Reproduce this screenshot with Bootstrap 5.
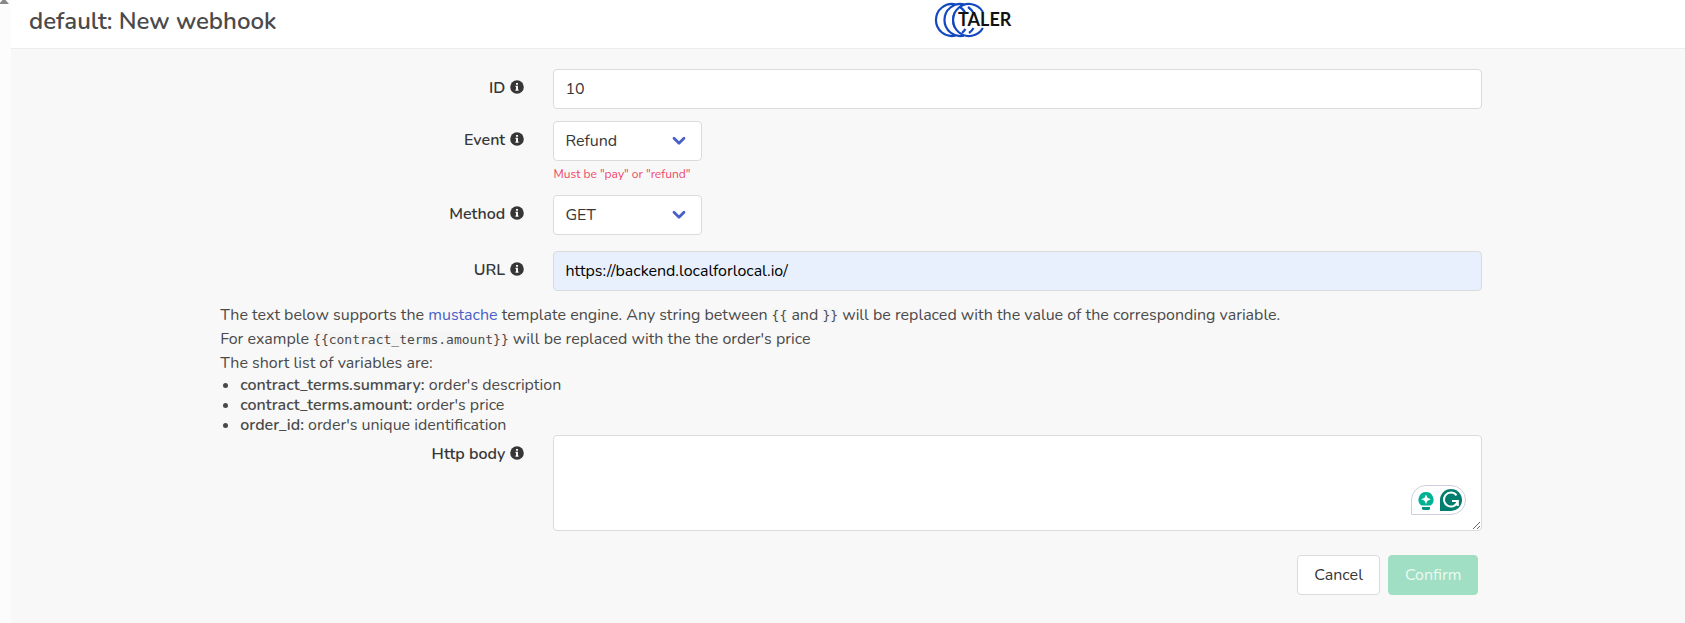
<!DOCTYPE html>
<html lang="en">
<head>
<meta charset="utf-8">
<meta name="viewport" content="width=device-width, initial-scale=1">
<title>default: New webhook</title>
<link href="https://cdn.jsdelivr.net/npm/bootstrap@5.3.0/dist/css/bootstrap.min.css" rel="stylesheet">
<style>
body { font-family: Nunito, "Open Sans", sans-serif; font-size: 16px; line-height: 24px; color: #4a4a4a; background: #f8f8f8; }
.side-strip { width: 11px; background: #fcfcfc; }
.side-strip svg { display: block; }
.title-bar { height: 49px; padding: 1px 0 0 18px; border-bottom: 1px solid #ededed; }
.title-bar h1 { font-size: 24px; line-height: 40px; font-weight: 600; }
.brand-mark { left: 57.5%; top: 2px; }
.hook-form { margin-left: 12.5%; width: 75.4%; padding-top: 20px; }
.field-row { gap: 29px; margin-bottom: 12px; }
.field-name { flex: 0 0 24.1%; padding-top: 7px; text-align: right; font-weight: 600; color: #363636; }
.field-name svg { margin: -4px 0 0 1px; }
.form-control, .form-select { height: 40px; padding: 7px 11px; font-size: 16px; line-height: 24px; color: #363636; border-color: #dbdbdb; border-radius: 4px; }
.form-select { width: 149px; background-image: none; }
.pick svg { right: 16px; top: 15px; pointer-events: none; }
.autofilled { background: #e8f0fe; color: #000; }
.form-control.body-text { height: 96px; }
.help-text { margin-top: 4px; font-size: 12px; line-height: 18px; color: #f14668; }
.guide a { color: #485fc7; text-decoration: none; }
.guide b { font-weight: 600; }
.guide code { font-family: "DejaVu Sans Mono", monospace; font-size: 13px; line-height: 1; color: #4a4a4a; background: #f5f5f5; }
.guide ul { padding-left: 20px; line-height: 20px; }
.writer-badge { right: 16px; bottom: 16px; }
.actions { gap: 8px; margin-top: 24px; padding: 0 4px 28px 0; }
.actions .btn { height: 40px; padding: 7px 16px; font-size: 16px; line-height: 24px; border-radius: 4px; }
.btn-plain { background: #fff; border-color: #dbdbdb; color: #363636; }
.btn-go, .btn-go:disabled { background: #a0dfc4; border-color: #a0dfc4; color: #ecf9f3; opacity: 1; }
</style>
</head>
<body>
<svg class="d-none" xmlns="http://www.w3.org/2000/svg">
  <symbol id="info" viewBox="0 0 14 14"><circle cx="7" cy="7" r="6.8" fill="#363636"/><path d="M6 3h2v1.800H6zM5.500 5.800H8v3.700h.6v1.200H5.400V9.500H6V7h-.5z" fill="#f8f8f8"/></symbol>
  <symbol id="chevron" viewBox="0 0 14 10"><path d="M2 2.300 7 7.200l5-4.900" fill="none" stroke="#485fc7" stroke-width="2.800" stroke-linecap="round" stroke-linejoin="round"/></symbol>
</svg>
<div class="d-flex min-vh-100">
  <aside class="side-strip flex-shrink-0"><svg width="9" height="4" viewBox="0 0 9 4"><path d="M2.500 0h3L9 4H-1z" fill="#878787"/></svg></aside>
  <div class="flex-grow-1">
    <header class="title-bar bg-white position-relative">
      <h1 class="m-0">default: New webhook</h1>
      <a href="#" class="brand-mark position-absolute translate-middle-x" aria-label="Taler">
        <svg class="d-block" width="80" height="36" viewBox="0 0 80 36">
          <g fill="none" stroke="#1448c0" stroke-width="2.200">
            <path d="M21.500 2.400A16 16 0 1 0 21.500 33.600"/>
            <path d="M30 2.400A16 16 0 1 0 30 33.600"/>
            <path d="M48.900 10A16 16 0 1 0 48.900 26"/>
            <path d="M25.500 4.500Q29 7 31.500 11M34 5q3.500 2.500 5.500 6M28 31q2-2 3.500-4M35 31q3-2 4.500-5"/>
          </g>
          <path d="M24 11h54v14H24z" fill="#fff"/>
          <path d="M20.500 11Q17.500 18 20.500 25" fill="none" stroke="#1448c0" stroke-width="2"/>
          <text x="24" y="24" font-family="Lato, sans-serif" font-size="18" font-weight="700" fill="#111">TALER</text>
        </svg>
      </a>
    </header>
    <form class="hook-form">
      <div class="field-row d-flex">
        <label class="field-name" for="hook-id">ID <svg width="14" height="14"><use href="#info"/></svg></label>
        <div class="flex-grow-1"><input class="form-control" id="hook-id" type="text" value="10"></div>
      </div>
      <div class="field-row d-flex">
        <label class="field-name" for="event">Event <svg width="14" height="14"><use href="#info"/></svg></label>
        <div>
          <div class="pick position-relative d-inline-block align-top"><select class="form-select" id="event"><option>Refund</option><option>Pay</option></select><svg class="position-absolute" width="14" height="10"><use href="#chevron"/></svg></div>
          <p class="help-text mb-0">Must be "pay" or "refund"</p>
        </div>
      </div>
      <div class="field-row d-flex mb-3">
        <label class="field-name" for="method">Method <svg width="14" height="14"><use href="#info"/></svg></label>
        <div class="pick position-relative"><select class="form-select" id="method"><option>GET</option><option>POST</option></select><svg class="position-absolute" width="14" height="10"><use href="#chevron"/></svg></div>
      </div>
      <div class="field-row d-flex">
        <label class="field-name" for="url">URL <svg width="14" height="14"><use href="#info"/></svg></label>
        <div class="flex-grow-1"><input class="form-control autofilled" id="url" type="text" value="https://backend.localforlocal.io/"></div>
      </div>
      <div class="guide">
        <p class="m-0">The text below supports the <a href="#">mustache</a> template engine. Any string between <code>{{</code> and <code>}}</code> will be replaced with the value of the corresponding variable.</p>
        <p class="m-0">For example <code>{{contract_terms.amount}}</code> will be replaced with the the order's price</p>
        <p class="m-0">The short list of variables are:</p>
        <ul class="m-0">
          <li><b>contract_terms.summary:</b> order's description</li>
          <li><b>contract_terms.amount:</b> order's price</li>
          <li><b>order_id:</b> order's unique identification</li>
        </ul>
      </div>
      <div class="field-row d-flex">
        <label class="field-name" for="body">Http body <svg width="14" height="14"><use href="#info"/></svg></label>
        <div class="flex-grow-1 position-relative">
          <textarea class="form-control body-text" id="body"></textarea>
          <svg class="writer-badge position-absolute" width="55" height="30" viewBox="0 0 55 30">
            <path d="M.5 29.500V15A14.500 14.500 0 0 1 15 .5h25a14.500 14.500 0 0 1 0 29z" fill="#fff" stroke="#cdcfdf"/>
            <path d="M15 7a7.500 7.500 0 0 0-4.500 13.500h9A7.500 7.500 0 0 0 15 7z" fill="#00b294"/><path d="M11 22h8v1.500q0 1.500-2 1.500h-4q-2 0-2-1.500z" fill="#009580"/>
            <path d="m15 9.500 1.500 3.300 3.300 1.500-3.300 1.500-1.500 3.300-1.500-3.300-3.300-1.500 3.300-1.500z" fill="#fff"/>
            <path d="M29 26V15a11 11 0 1 1 11 11z" fill="#027e6f"/>
            <path d="M45.500 10.300a7 7 0 1 0 1.300 5.700H41m5.800 0v5" fill="none" stroke="#fff" stroke-width="2"/>
          </svg>
        </div>
      </div>
      <div class="actions d-flex justify-content-end">
        <button class="btn btn-plain" type="button">Cancel</button>
        <button class="btn btn-go" type="submit" disabled>Confirm</button>
      </div>
    </form>
  </div>
</div>
<script src="https://cdn.jsdelivr.net/npm/bootstrap@5.3.0/dist/js/bootstrap.bundle.min.js"></script>
</body>
</html>
